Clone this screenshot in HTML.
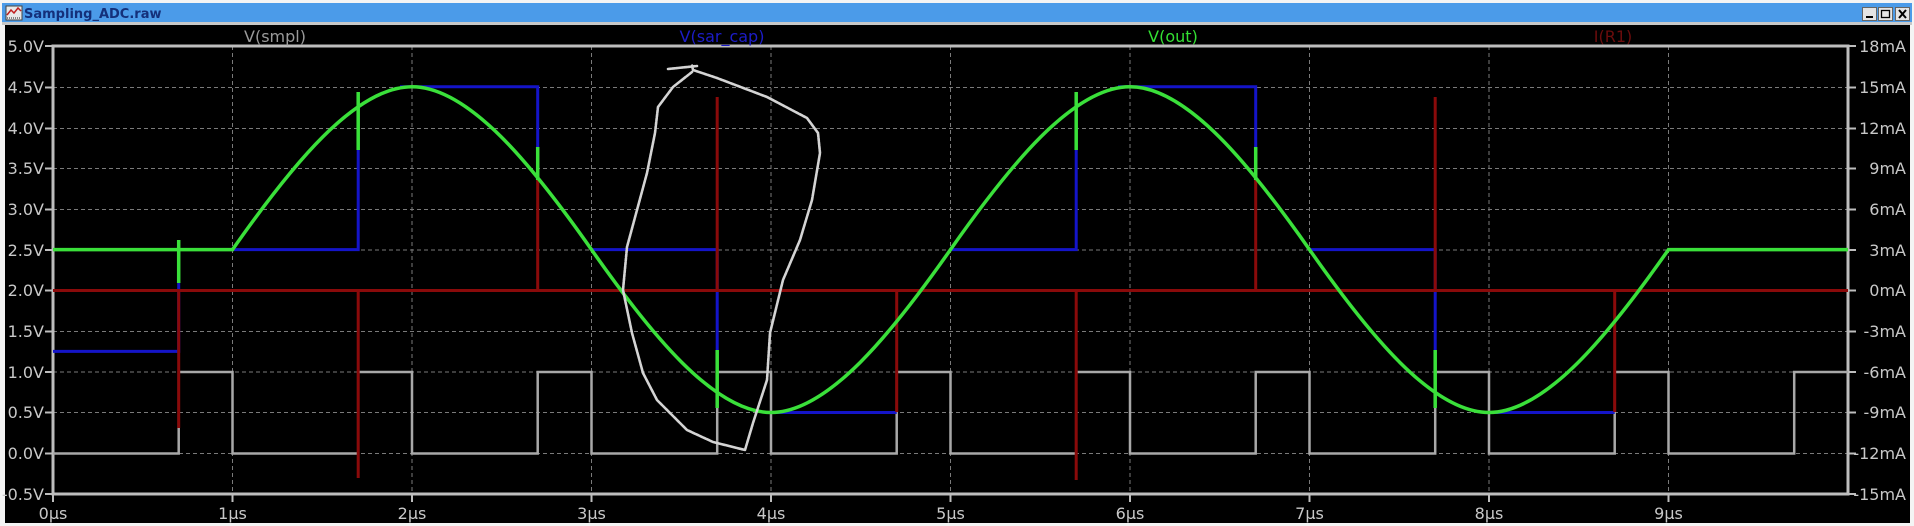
<!DOCTYPE html>
<html><head><meta charset="utf-8"><style>
html,body{margin:0;padding:0;width:1914px;height:526px;overflow:hidden;background:#fff;}
svg{display:block;}
text{font-family:"DejaVu Sans","Liberation Sans",sans-serif;}
</style></head><body>
<svg width="1914" height="526" viewBox="0 0 1914 526" xmlns="http://www.w3.org/2000/svg">
<rect x="0" y="0" width="1914" height="526" fill="#f4f4f4"/>
<rect x="2" y="3" width="1910" height="20" fill="#4b9be9"/>
<rect x="2" y="22" width="1910" height="3" fill="#c8c8c8"/>
<rect x="6" y="6" width="16" height="14" fill="#e8e8e8" stroke="#444" stroke-width="1"/>
<path d="M7 15 L11 10 L14 13 L18 8 L21 11" stroke="#c02020" stroke-width="1.5" fill="none"/>
<path d="M7 18 H21" stroke="#222" stroke-dasharray="1,1"/>
<text x="24" y="18" font-size="13" font-weight="bold" fill="#14307a">Sampling_ADC.raw</text>
<g stroke="#666" stroke-width="1">
<rect x="1862.5" y="7.5" width="14" height="13" fill="#e4e4e4"/>
<rect x="1878.5" y="7.5" width="14" height="13" fill="#e4e4e4"/>
<rect x="1895.5" y="7.5" width="14" height="13" fill="#e4e4e4"/>
</g>
<rect x="1866" y="16" width="7" height="2" fill="#000"/>
<rect x="1881.5" y="10.5" width="8" height="7" fill="none" stroke="#000" stroke-width="1.3"/>
<path d="M1899 10 L1906 18 M1906 10 L1899 18" stroke="#000" stroke-width="2"/>
<rect x="5" y="25" width="1905" height="498" fill="#000"/>

<g stroke="#7a7a7a" stroke-width="1" stroke-dasharray="4,3" fill="none">
<path d="M53 87.5H1848M53 128.5H1848M53 168.5H1848M53 209.5H1848M53 250H1848M53 290.5H1848M53 331.5H1848M53 372H1848M53 412.5H1848M53 453.5H1848"/>
<path d="M232.5 46V494M412 46V494M591.5 46V494M771 46V494M950.5 46V494M1130 46V494M1309.5 46V494M1489 46V494M1668.5 46V494"/>
</g>
<rect x="53" y="46" width="1795" height="448" fill="none" stroke="#bdbdbd" stroke-width="3"/>
<g stroke="#bdbdbd" stroke-width="2">
<path d="M45 46H53M45 87.5H53M45 128.5H53M45 168.5H53M45 209.5H53M45 250H53M45 290.5H53M45 331.5H53M45 372H53M45 412.5H53M45 453.5H53M45 494H53"/>
<path d="M1848 46H1856M1848 87.5H1856M1848 128.5H1856M1848 168.5H1856M1848 209.5H1856M1848 250H1856M1848 290.5H1856M1848 331.5H1856M1848 372H1856M1848 412.5H1856M1848 453.5H1856M1848 494H1856"/>
<path d="M53 494V502M232.5 494V502M412 494V502M591.5 494V502M771 494V502M950.5 494V502M1130 494V502M1309.5 494V502M1489 494V502M1668.5 494V502"/>
</g>
<g font-size="16" fill="#c8c8c8" text-anchor="end">
<text x="44" y="52">5.0V</text><text x="44" y="93">4.5V</text><text x="44" y="134">4.0V</text><text x="44" y="174">3.5V</text><text x="44" y="215">3.0V</text><text x="44" y="256">2.5V</text><text x="44" y="296">2.0V</text><text x="44" y="337">1.5V</text><text x="44" y="378">1.0V</text><text x="44" y="418">0.5V</text><text x="44" y="459">0.0V</text><text x="44" y="500">-0.5V</text>
</g>
<g font-size="16" fill="#c8c8c8" text-anchor="end">
<text x="1906" y="52">18mA</text><text x="1906" y="93">15mA</text><text x="1906" y="134">12mA</text><text x="1906" y="174">9mA</text><text x="1906" y="215">6mA</text><text x="1906" y="256">3mA</text><text x="1906" y="296">0mA</text><text x="1906" y="337">-3mA</text><text x="1906" y="378">-6mA</text><text x="1906" y="418">-9mA</text><text x="1906" y="459">-12mA</text><text x="1906" y="500">-15mA</text>
</g>
<g font-size="16" fill="#c8c8c8" text-anchor="middle">
<text x="53" y="519">0µs</text><text x="232.5" y="519">1µs</text><text x="412" y="519">2µs</text><text x="591.5" y="519">3µs</text><text x="771" y="519">4µs</text><text x="950.5" y="519">5µs</text><text x="1130" y="519">6µs</text><text x="1309.5" y="519">7µs</text><text x="1489" y="519">8µs</text><text x="1668.5" y="519">9µs</text>
</g>
<g font-size="16" text-anchor="middle">
<text x="275" y="42" fill="#9a9a9a">V(smpl)</text>
<text x="722" y="42" fill="#1c1cc8">V(sar_cap)</text>
<text x="1173" y="42" fill="#33e033">V(out)</text>
<text x="1613" y="42" fill="#6a0c0c">I(R1)</text>
</g>

<path d="M53 453.5H178.7V372H232.5V453.5H358.2V372H412V453.5H537.7V372H591.5V453.5H717.2V372H771V453.5H896.7V372H950.5V453.5H1076.2V372H1130V453.5H1255.7V372H1309.5V453.5H1435.2V372H1489V453.5H1614.7V372H1668.5V453.5H1794.2V372H1848" stroke="#a8a8a8" stroke-width="2.5" fill="none"/>
<!-- blue (hold segments) -->
<g stroke="#1414c8" stroke-width="3" fill="none">
<path d="M53 351.4H178.7V282"/>
<path d="M232.5 249.6H358.2V150"/>
<path d="M400 86.7H537.7V147"/>
<path d="M591.5 249.6H717.2V350"/>
<path d="M771 412.5H896.7"/>
<path d="M950.5 249.6H1076.2V150"/>
<path d="M1118 86.7H1255.7V147"/>
<path d="M1309.5 249.6H1435.2V350"/>
<path d="M1489 412.5H1614.7"/>
</g>
<!-- red -->
<g stroke="#8a0a0a" stroke-width="3" fill="none">
<path d="M53 290.5H1848"/>
<path d="M178.7 290.5V428M358.2 290.5V478M537.7 290.5V150M717.2 290.5V97M896.7 290.5V412M1076.2 290.5V480M1255.7 290.5V150M1435.2 290.5V97M1614.7 290.5V412"/>
</g>
<!-- green -->
<path d="M53 249.6H232.5 c58.5,-83.4 122.4,-162.9 179.5,-162.9 c57.1,0 121,79.5 179.5,162.9 c58.5,83.4 122.4,162.9 179.5,162.9 c57.1,0 121,-79.5 179.5,-162.9 c58.5,-83.4 122.4,-162.9 179.5,-162.9 c57.1,0 121,79.5 179.5,162.9 c58.5,83.4 122.4,162.9 179.5,162.9 c57.1,0 121,-79.5 179.5,-162.9 H1848" stroke="#3ae03a" stroke-width="3.5" fill="none"/>
<g stroke="#3ae03a" stroke-width="3.5">
<path d="M178.7 240V283M358.2 92V150M537.7 147V180M717.2 350V408M1076.2 92V150M1255.7 147V180M1435.2 350V408"/>
</g>
<!-- scribble -->
<path d="M668 69 L697 66 M692 72 L673 87 L658 107 L655 133 L647 173 L637 210 L627 247 L623 290 L632 333 L643 373 L657 400 L687 430 L713 442 L745 450 L753 423 L767 380 L770 333 L783 280 L800 240 L812 200 L820 153 L818 133 L807 118 L767 97 L717 78 L693 70 L692 65" stroke="#d4d4d4" stroke-width="2.6" fill="none" stroke-linejoin="round" stroke-linecap="round" stroke-dasharray="3,1"/>
</svg>
</body></html>
